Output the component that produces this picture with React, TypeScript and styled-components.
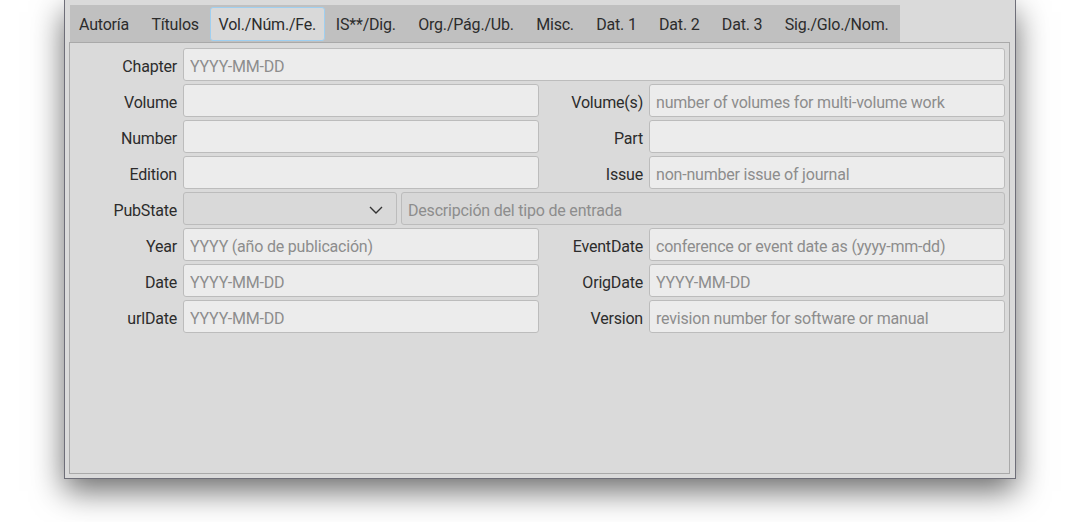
import React from "react";
import styled, { createGlobalStyle } from "styled-components";

const Global = createGlobalStyle`
  html, body { margin: 0; padding: 0; background: #ffffff; }
  body { font-family: Roboto, "Liberation Sans", sans-serif; overflow: hidden; }
  * { box-sizing: border-box; }
`;

const Page = styled.div`
  width: 1080px;
  height: 522px;
  padding-left: 64px;
`;

const Window = styled.div`
  width: 952px;
  height: 479px;
  background: #dadada;
  border: 1px solid #6e6e78;
  border-top: none;
  box-shadow: 0 12px 30px rgba(0, 0, 0, 0.58);
  padding: 5px 5px 4px 4px;
  display: flex;
  flex-direction: column;
`;

const TabStrip = styled.div`
  display: flex;
  align-self: flex-start;
  margin-left: 1px;
  height: 37px;
  background: #c0c0c0;
  align-items: stretch;
`;

const Tab = styled.div<{ $active?: boolean }>`
  display: flex;
  align-items: center;
  padding: 1px ${(p) => (p.$active ? "7.5px" : "11.2px")} 0;
  margin: ${(p) => (p.$active ? "2px 0 1px" : "0")};
  font-size: 16px;
  letter-spacing: -0.2px;
  color: #2c2c2c;
  white-space: nowrap;
  background: ${(p) => (p.$active ? "#d9d9d9" : "transparent")};
  border: ${(p) => (p.$active ? "1px solid #9fcff0" : "none")};
  border-radius: ${(p) => (p.$active ? "3px" : "0")};
  &:first-child { padding-left: 9px; }
`;

const Panel = styled.div`
  flex: 1;
  border: 1px solid #a9a9a9;
  padding: 5px 5px 5px 0;
`;

const Grid = styled.div`
  display: grid;
  grid-template-columns: 107px 356px 98px 356px;
  column-gap: 6px;
  row-gap: 3px;
  grid-auto-rows: 33px;
`;

const Label = styled.div`
  display: flex;
  align-items: center;
  justify-content: flex-end;
  padding-top: 3px;
  font-size: 16px;
  letter-spacing: -0.2px;
  color: #2c2c2c;
  white-space: nowrap;
`;

const Field = styled.input<{ $span?: boolean; $muted?: boolean }>`
  grid-column: ${(p) => (p.$span ? "2 / 5" : "auto")};
  width: 100%;
  height: 33px;
  margin: 0;
  padding: 3px 6px 0;
  border: 1px solid #bcbcbc;
  border-radius: 3px;
  background: ${(p) => (p.$muted ? "#d7d7d7" : "#ececec")};
  font-family: Roboto, "Liberation Sans", sans-serif;
  font-size: 16px;
  letter-spacing: -0.2px;
  color: #2c2c2c;
  outline: none;
  &::placeholder { color: #8d8d8d; opacity: 1; }
`;

const SplitRow = styled.div`
  grid-column: 2 / 5;
  display: flex;
  gap: 4px;
`;

const Select = styled.div`
  width: 214px;
  flex: none;
  height: 33px;
  border: 1px solid #bcbcbc;
  border-radius: 3px;
  background: #d9d9d9;
  display: flex;
  align-items: center;
  justify-content: flex-end;
  padding: 2px 13px 0 0;
  color: #333;
`;

const Chevron = () => (
  <svg width="14" height="8" viewBox="0 0 14 8" fill="none">
    <path d="M1 1 L7 7 L13 1" stroke="#333" strokeWidth="1.4" />
  </svg>
);

const tabs = [
  "Autoría",
  "Títulos",
  "Vol./Núm./Fe.",
  "IS**/Dig.",
  "Org./Pág./Ub.",
  "Misc.",
  "Dat. 1",
  "Dat. 2",
  "Dat. 3",
  "Sig./Glo./Nom.",
];

type Pair = [string, string, string, string];
const rowsTop: Pair[] = [
  ["Volume", "", "Volume(s)", "number of volumes for multi-volume work"],
  ["Number", "", "Part", ""],
  ["Edition", "", "Issue", "non-number issue of journal"],
];
const rowsBottom: Pair[] = [
  ["Year", "YYYY (año de publicación)", "EventDate", "conference or event date as (yyyy-mm-dd)"],
  ["Date", "YYYY-MM-DD", "OrigDate", "YYYY-MM-DD"],
  ["urlDate", "YYYY-MM-DD", "Version", "revision number for software or manual"],
];

const renderPairs = (rows: Pair[]) =>
  rows.map(([l1, p1, l2, p2]) => (
    <React.Fragment key={l1}>
      <Label>{l1}</Label>
      <Field placeholder={p1} />
      <Label>{l2}</Label>
      <Field placeholder={p2} />
    </React.Fragment>
  ));

export default function App() {
  return (
    <>
      <Global />
      <Page>
        <Window>
          <TabStrip>
            {tabs.map((t, i) => (
              <Tab key={t} $active={i === 2}>
                {t}
              </Tab>
            ))}
          </TabStrip>
          <Panel>
            <Grid>
              <Label>Chapter</Label>
              <Field $span placeholder="YYYY-MM-DD" />
              {renderPairs(rowsTop)}
              <Label>PubState</Label>
              <SplitRow>
                <Select>
                  <Chevron />
                </Select>
                <Field $muted placeholder="Descripción del tipo de entrada" />
              </SplitRow>
              {renderPairs(rowsBottom)}
            </Grid>
          </Panel>
        </Window>
      </Page>
    </>
  );
}
